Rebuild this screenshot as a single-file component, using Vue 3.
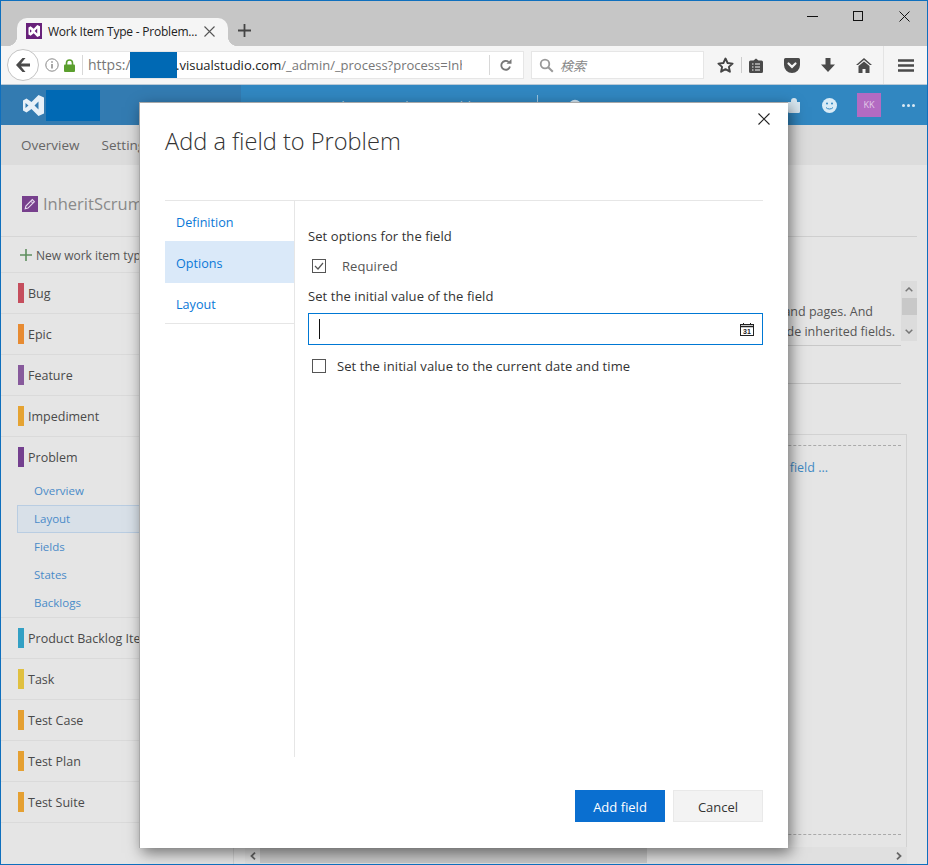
<script setup>
const types = [
  { name: 'Bug', color: '#c54e5d' },
  { name: 'Epic', color: '#e78b32' },
  { name: 'Feature', color: '#875a9c' },
  { name: 'Impediment', color: '#e5a332' },
  { name: 'Problem', color: '#74408f', subs: ['Overview', 'Layout', 'Fields', 'States', 'Backlogs'] },
  { name: 'Product Backlog Item', color: '#33a0c4' },
  { name: 'Task', color: '#e0c040' },
  { name: 'Test Case', color: '#e5a032' },
  { name: 'Test Plan', color: '#e5a032' },
  { name: 'Test Suite', color: '#e5a032' },
]
const tabs = ['Definition', 'Options', 'Layout']
</script>

<template>
  <div class="win">
    <div class="tabstrip">
      <div class="tab">
        <svg class="fav" width="16" height="16" viewBox="0 0 16 16"><rect width="16" height="16" fill="#68217a"/><path fill-rule="evenodd" d="M11.300 2 14 3.300v9.400L11.300 14 7.700 10.300 4.600 12.700 2.500 11.600V4.400L4.600 3.300 7.700 5.700zM4 6.300v3.400L5.800 8zM11.200 5.400 8.700 8l2.500 2.600z" fill="#fff"/></svg>
        <span class="tabtitle">Work Item Type - Problem...</span>
        <svg width="11" height="11" viewBox="0 0 11 11"><path d="M.5.5l10 10M10.500.5l-10 10" stroke="#555" stroke-width="1.100"/></svg>
      </div>
      <svg class="plus" width="13" height="13" viewBox="0 0 13 13"><path d="M6.500 0v13M0 6.500h13" stroke="#444" stroke-width="1.800"/></svg>
      <div class="winctl">
        <svg width="11" height="11" viewBox="0 0 11 11"><path d="M0 5.500h11" stroke="#111" stroke-width="1"/></svg>
        <svg width="11" height="11" viewBox="0 0 11 11"><rect x=".5" y=".5" width="9" height="9" fill="none" stroke="#111"/></svg>
        <svg width="11" height="11" viewBox="0 0 11 11"><path d="M.5.5l10 10M10.500.5l-10 10" stroke="#111" stroke-width="1"/></svg>
      </div>
    </div>

    <div class="toolbar">
      <div class="urlbar">
        <div class="back">
          <svg width="16" height="14" viewBox="0 0 16 14"><path d="M7.500 0 1 7l6.500 7h3L6 8.600h9V5.400H6L10.500 0z" fill="#4a4a4a"/></svg>
        </div>
        <svg class="info" width="14" height="14" viewBox="0 0 14 14"><circle cx="7" cy="7" r="6.200" fill="none" stroke="#888"/><path d="M7 6v4.500M7 3.300v1.500" stroke="#888" stroke-width="1.500"/></svg>
        <svg class="lock" width="11" height="13" viewBox="0 0 11 13"><path d="M2.500 6V4a3 3 0 0 1 6 0v2" fill="none" stroke="#5b9f2e" stroke-width="1.600"/><rect y="5.500" width="11" height="7.500" rx="1" fill="#5b9f2e"/></svg>
        <span class="vsep"></span>
        <div class="url"><span class="scheme">https:/</span><span class="redact"></span><b>.visualstudio.com</b>/_admin/_process?process=Inh</div>
        <span class="vsep2"></span>
        <svg class="reload" width="12" height="12" viewBox="0 0 12 12"><path d="M10 7.500A4.400 4.400 0 1 1 8.600 3" fill="none" stroke="#777" stroke-width="1.800"/><path d="M6.500 4.800h5V0z" fill="#777"/></svg>
      </div>
      <div class="search">
        <svg width="15" height="15" viewBox="0 0 15 15"><circle cx="6" cy="6" r="4.300" fill="none" stroke="#999" stroke-width="1.800"/><path d="m9.200 9.200 4.600 4.600" stroke="#999" stroke-width="2"/></svg>
        <span>検索</span>
      </div>
      <div class="tools">
        <svg class="t-star" width="17" height="16" viewBox="0 0 17 16"><path d="m8.500 1.500 2.100 4.500 5 .6-3.700 3.300 1 4.800-4.400-2.500-4.400 2.500 1-4.800L1.400 6.600l5-.6z" fill="none" stroke="#444" stroke-width="1.900" stroke-linejoin="round"/></svg>
        <span class="tsep"></span>
        <svg class="t-clip" width="14" height="15" viewBox="0 0 14 15"><path d="M1.500 2.500h3L7 .5l2.500 2h3a1.500 1.500 0 0 1 1.500 1.500v9.500a1.500 1.500 0 0 1-1.500 1.500h-11A1.500 1.500 0 0 1 0 13.500V4a1.500 1.500 0 0 1 1.500-1.500z" fill="#4a4a4a"/><path d="M3 6h1.500M6 6h5M3 9h1.500M6 9h5M3 12h1.500M6 12h5" stroke="#f5f5f5" stroke-width="1.200"/></svg>
        <svg class="t-pocket" width="16" height="15" viewBox="0 0 16 15"><path d="M1.500 0h13A1.500 1.500 0 0 1 16 1.500V7a8 8 0 0 1-16 0V1.500A1.500 1.500 0 0 1 1.500 0z" fill="#4a4a4a"/><path d="m4.500 5.500 3.500 3.400 3.500-3.400" fill="none" stroke="#f5f5f5" stroke-width="2.200" stroke-linecap="round"/></svg>
        <svg class="t-down" width="14" height="14" viewBox="0 0 14 14"><path d="M4.500 0h5v6.500H14L7 14 0 6.500h4.500z" fill="#4a4a4a"/></svg>
        <svg class="t-home" width="16" height="15" viewBox="0 0 16 15"><path d="M8 0 0 7h2L8 2l6 5h2z" fill="#4a4a4a"/><path d="M8 3.500 2.500 8v7h4v-4h3v4h4V8z" fill="#4a4a4a"/></svg>
        <span class="tsep2"></span>
        <svg class="t-menu" width="16" height="13" viewBox="0 0 16 13"><path d="M0 1.500h16M0 6.500h16M0 11.500h16" stroke="#4a4a4a" stroke-width="2.400"/></svg>
      </div>
    </div>

    <div class="apphead">
      <div class="brand">
        <svg width="21" height="21" viewBox="0 0 21 21"><path fill-rule="evenodd" d="M15.500 0 21 2.500v16L15.500 21 8.500 14 3.500 17.500 0 15.500v-10L3.500 3.500 8.500 7zM2.500 8v5L5.500 10.500zM15.500 6.500 11.500 10.500l4 4z" fill="#e6f0f8"/></svg>
        <span class="brandbox"></span>
      </div>
      <div class="headnav">
        <span>Home</span><span>Code</span><span>Work</span><span>Build</span>
        <i class="navsep"></i>
        <svg class="gear" width="14" height="14" viewBox="0 0 14 14"><circle cx="7" cy="7" r="5" fill="none" stroke="#cfe3f1" stroke-width="2.500"/></svg>
      </div>
      <div class="headright">
        <svg width="14" height="15" viewBox="0 0 14 15"><path d="M4 4V3a3 3 0 0 1 6 0v1h3v9.500a1.500 1.500 0 0 1-1.500 1.500h-9A1.500 1.500 0 0 1 1 13.500V4z" fill="#d9e8f2"/></svg>
        <svg class="smile" width="15" height="15" viewBox="0 0 15 15"><circle cx="7.500" cy="7.500" r="7.500" fill="#d9ebf6"/><circle cx="5" cy="5.500" r="1" fill="#3187c1"/><circle cx="10" cy="5.500" r="1" fill="#3187c1"/><path d="M4 9.500c1.500 2 5.500 2 7 0" fill="none" stroke="#3187c1"/></svg>
        <span class="avatar">KK</span>
        <span class="dots"><i></i><i></i><i></i></span>
      </div>
    </div>

    <div class="subnav"><span>Overview</span><span>Settings</span></div>

    <div class="body">
      <aside class="side">
        <div class="proc">
          <span class="procicon">
            <svg width="12" height="12" viewBox="0 0 12 12"><path d="M1.200 10.800l.7-2.800L8.300 1.600l2.100 2.100L4 10.100zM7.400 3.600l1 1" fill="none" stroke="#e8dcef" stroke-width="1.100"/></svg>
          </span>
          <span>InheritScrum</span>
        </div>
        <div class="newtype">
          <svg width="12" height="12" viewBox="0 0 12 12"><path d="M6 0v12M0 6h12" stroke="#5f8f5f" stroke-width="1.600"/></svg>
          <span>New work item type</span>
        </div>
        <div v-for="t in types" :key="t.name" class="group">
          <div class="row">
            <i class="bar" :style="{ background: t.color }"></i>
            <span>{{ t.name }}</span>
          </div>
          <div v-if="t.subs" class="subs">
            <div v-for="s in t.subs" :key="s" class="sub" :class="{ on: s === 'Layout' }">{{ s }}</div>
          </div>
        </div>
      </aside>

      <main class="main">
        <div class="pagehead"></div>
        <div class="desc">
          <div class="desctext">
            <p class="l1">and pages. And</p>
            <p>hide inherited fields.</p>
          </div>
          <div class="vscroll">
            <svg width="8" height="5" viewBox="0 0 8 5"><path d="M.7 4.300 4 1l3.300 3.300" fill="none" stroke="#777" stroke-width="1.500"/></svg>
            <i></i>
            <svg class="vdown" width="8" height="5" viewBox="0 0 8 5"><path d="M.7.700 4 4 7.300.700" fill="none" stroke="#777" stroke-width="1.500"/></svg>
          </div>
        </div>
        <div class="tabline"></div>
        <div class="panel">
          <div class="dash"></div>
          <div class="addlink">Add field ...</div>
          <div class="dash bottom"></div>
        </div>
        <div class="hscroll">
          <svg width="6" height="8" viewBox="0 0 6 8"><path d="M5 .7 1.500 4 5 7.300" fill="none" stroke="#666" stroke-width="1.800"/></svg>
          <i></i>
          <svg class="hright" width="6" height="8" viewBox="0 0 6 8"><path d="M1 .7 4.500 4 1 7.300" fill="none" stroke="#666" stroke-width="1.800"/></svg>
        </div>
      </main>
    </div>

    <section class="modal">
      <header class="mhead">
        <h1>Add a field to Problem</h1>
        <svg class="mclose" width="12" height="12" viewBox="0 0 12 12"><path d="M.5.500l11 11M11.500.500l-11 11" stroke="#222" stroke-width="1.100"/></svg>
      </header>
      <div class="mbody">
        <nav class="mnav">
          <div v-for="t in tabs" :key="t" class="mtab" :class="{ active: t === 'Options' }">{{ t }}</div>
        </nav>
        <div class="mform">
          <div class="lbl first">Set options for the field</div>
          <label class="chk req">
            <svg width="14" height="14" viewBox="0 0 14 14"><rect x=".5" y=".5" width="13" height="13" fill="#fff" stroke="#555"/><path d="m3 7 3 3 5-6" fill="none" stroke="#555" stroke-width="1.200"/></svg>
            <span>Required</span>
          </label>
          <div class="lbl second">Set the initial value of the field</div>
          <div class="input">
            <i class="caret"></i>
            <svg width="14" height="13" viewBox="0 0 14 13"><rect x=".5" y="1.500" width="13" height="11" fill="#fff" stroke="#222"/><path d="M1 3.500h12" stroke="#222" stroke-width="1.500"/><path d="M3.500 0v2M10.500 0v2" stroke="#222"/><text x="7" y="11" text-anchor="middle" class="cal31">31</text></svg>
          </div>
          <label class="chk now">
            <svg width="14" height="14" viewBox="0 0 14 14"><rect x=".5" y=".5" width="13" height="13" fill="#fff" stroke="#555"/></svg>
            <span>Set the initial value to the current date and time</span>
          </label>
        </div>
      </div>
      <footer class="mfoot">
        <button class="primary">Add field</button>
        <button class="ghost">Cancel</button>
      </footer>
    </section>
  </div>
</template>

<style>
html, body { margin: 0; padding: 0; background: #e5e5e5; }
</style>

<style scoped>
svg { flex: none; }
.win {
  position: relative;
  width: 928px;
  height: 865px;
  box-sizing: border-box;
  border: 1px solid #0f6fbd;
  overflow: hidden;
  display: flex;
  flex-direction: column;
  font-family: "Open Sans", "Noto Sans CJK JP", sans-serif;
  font-size: 12.5px;
  color: #444;
  background: #e5e5e5;
}
.tabstrip {
  height: 45px;
  flex: none;
  background: #c6c6c6;
  display: flex;
  align-items: flex-end;
  position: relative;
}
.tab {
  position: relative;
  margin-left: 16px;
  width: 211px;
  height: 28px;
  box-sizing: border-box;
  background: #f5f5f5;
  border-radius: 10px 10px 0 0;
  display: flex;
  align-items: center;
  padding: 0 13px 2px 9px;
  gap: 6px;
  color: #222;
}
.tab::before, .tab::after {
  content: "";
  position: absolute;
  bottom: 0;
  width: 10px;
  height: 10px;
}
.tab::before { left: -10px; background: radial-gradient(circle at 0 0, transparent 10px, #f5f5f5 10.5px); }
.tab::after { right: -10px; background: radial-gradient(circle at 100% 0, transparent 10px, #f5f5f5 10.5px); }
.tabtitle { flex: 1; white-space: nowrap; font-size: 12px; letter-spacing: -.22px; }
.plus { margin: 0 0 9px 10px; }
.winctl {
  position: absolute;
  top: 10px;
  right: 17px;
  display: flex;
  gap: 35px;
}
.toolbar {
  height: 39px;
  flex: none;
  box-sizing: border-box;
  background: #f5f5f5;
  border-bottom: 1px solid #b9c9d6;
  display: flex;
  align-items: center;
  position: relative;
}
.urlbar {
  margin-left: 19px;
  width: 504px;
  height: 28px;
  box-sizing: border-box;
  background: #fff;
  border: 1px solid #e6e6e6;
  display: flex;
  align-items: center;
  position: relative;
}
.back {
  position: absolute;
  left: -14px;
  top: -3px;
  width: 30px;
  height: 30px;
  border-radius: 50%;
  border: 1px solid #c4c4c4;
  background: #fff;
  display: flex;
  align-items: center;
  justify-content: center;
}
.info { margin-left: 24px; }
.lock { margin-left: 5px; }
.vsep { width: 1px; height: 20px; background: #d8d8d8; margin-left: 7px; flex: none; }
.url {
  margin: 0 27px 0 5px;
  flex: 1;
  height: 26px;
  line-height: 26px;
  font-size: 13px;
  color: #777;
  white-space: nowrap;
  overflow: hidden;
  display: flex;
  min-width: 0;
}
.scheme { width: 42px; flex: none; font-size: 14px; }
.url b { font-weight: 400; color: #222; margin-left: -1px; }
.redact { width: 47px; height: 28px; background: #0069b4; flex: none; }
.vsep2 { width: 1px; height: 20px; background: #d8d8d8; flex: none; }
.reload { margin: 0 11px 0 10px; }
.search {
  margin-left: 7px;
  width: 173px;
  height: 28px;
  box-sizing: border-box;
  background: #fff;
  border: 1px solid #e6e6e6;
  display: flex;
  align-items: center;
  padding-left: 7px;
  gap: 6px;
  font-style: italic;
  font-size: 13px;
  color: #888;
}
.tools { display: flex; align-items: center; margin-left: 13px; flex: 1; }
.tsep { width: 1px; height: 16px; background: #ccc; margin-left: 7px; }
.t-clip { margin-left: 7px; }
.t-pocket { margin-left: 21px; }
.t-down { margin-left: 21px; }
.t-home { margin-left: 21px; }
.tsep2 { width: 1px; height: 38px; background: #e4e4e4; margin-left: 11px; }
.t-menu { margin-left: 14px; }
.apphead {
  height: 40px;
  flex: none;
  display: flex;
  background: #3187c1;
}
.brand {
  width: 240px;
  flex: none;
  background: #337bb1;
  display: flex;
  align-items: center;
  padding-left: 22px;
  box-sizing: border-box;
  gap: 2px;
}
.brandbox { width: 54px; height: 31px; background: #0069b4; }
.headnav {
  flex: 1;
  display: flex;
  align-items: flex-start;
  padding: 12px 0 0 15px;
  gap: 28px;
  color: #b9d7ea;
  font-size: 13px;
  position: relative;
}
.navsep { position: absolute; left: 296px; top: 10px; width: 1px; height: 20px; background: #9cc4de; }
.gear { position: absolute; left: 327px; top: 14px; }
.headright { width: 140px; display: flex; align-items: center; flex: none; }
.smile { margin-left: 21px; }
.avatar {
  margin-left: 20px;
  width: 24px;
  height: 24px;
  background: #b36bc2;
  color: #e2cbe8;
  font-size: 9px;
  line-height: 24px;
  text-align: center;
}
.dots { display: flex; gap: 2px; margin-left: 21px; }
.dots i { width: 3px; height: 3px; background: #dbe9f3; border-radius: 50%; }
.subnav {
  height: 40px;
  flex: none;
  background: #dcdcdc;
  display: flex;
  align-items: center;
  padding-left: 20px;
  gap: 22px;
  font-size: 13.5px;
  color: #666;
}
.body { flex: 1; display: flex; min-height: 0; }
.side {
  width: 233px;
  flex: none;
  box-sizing: border-box;
  border-right: 1px solid #d2d2d2;
}
.proc {
  height: 72px;
  box-sizing: border-box;
  border-bottom: 1px solid #d6d6d6;
  display: flex;
  align-items: center;
  padding: 6px 0 0 21px;
  gap: 5px;
  font-size: 16.5px;
  color: #8a8a8a;
  white-space: nowrap;
}
.procicon {
  width: 16px;
  height: 16px;
  background: #77408d;
  display: flex;
  align-items: center;
  justify-content: center;
}
.newtype {
  height: 36px;
  box-sizing: border-box;
  border-bottom: 1px solid #dadada;
  display: flex;
  align-items: center;
  padding: 1px 0 0 19px;
  gap: 4px;
  font-size: 12px;
  color: #555;
  white-space: nowrap;
}
.group { border-bottom: 1px solid #dadada; }
.row {
  height: 40px;
  display: flex;
  align-items: center;
  padding-left: 17px;
  gap: 4px;
  white-space: nowrap;
  color: #4a4a4a;
}
.bar { width: 6px; height: 20px; flex: none; }
.subs { padding-left: 16px; }
.sub {
  height: 28px;
  line-height: 28px;
  padding-left: 17px;
  font-size: 11.5px;
  color: #4a8bc8;
  box-sizing: border-box;
}
.sub.on {
  background: #d8e0e8;
  border: 1px solid #b9cde2;
  border-right: 0;
  line-height: 26px;
  padding-left: 16px;
}
.main { flex: 1; display: flex; flex-direction: column; min-width: 0; }
.pagehead { height: 72px; flex: none; border-bottom: 1px solid #cfcfcf; margin-right: 10px; box-sizing: border-box; }
.desc { display: flex; margin: 44px 10px 0 0; height: 66px; align-items: flex-start; }
.desctext {
  flex: 1;
  height: 65px;
  border-bottom: 1px solid #c8c8c8;
  text-align: right;
  box-sizing: border-box;
  padding-top: 21px;
  padding-right: 6px;
  color: #555;
  white-space: nowrap;
  overflow: hidden;
}
.desctext p { margin: 0; line-height: 20px; font-size: 12.5px; }
.desctext .l1 { margin-right: 22px; }
.vscroll {
  width: 16px;
  height: 60px;
  background: #dcdcdc;
  display: flex;
  flex-direction: column;
  align-items: center;
  padding-top: 6px;
  box-sizing: border-box;
}
.vscroll i { width: 15px; height: 17px; background: #c8c8c8; margin-top: 6px; }
.vdown { margin-top: 14px; }
.tabline { height: 37px; margin-right: 26px; border-bottom: 1px solid #c8c8c8; box-sizing: border-box; flex: none; }
.panel {
  flex: 1;
  margin: 50px 20px 0 0;
  border: 1px solid #d2d2d2;
  border-bottom: 0;
  box-sizing: border-box;
  padding: 10px 5px 0 0;
  display: flex;
  flex-direction: column;
}
.dash { border-top: 1px dashed #aaa; }
.dash.bottom { margin-top: auto; margin-bottom: 12px; }
.addlink { color: #3f8ac4; text-align: right; padding: 13px 73px 0 0; font-size: 12.5px; }
.hscroll {
  height: 17px;
  flex: none;
  margin: 0 20px 0 11px;
  display: flex;
  align-items: center;
  background: #e0e0e0;
  padding: 0 5px;
}
.hscroll i { width: 387px; height: 15px; margin-left: 4px; background: #c8c8c8; }
.hright { margin-left: auto; }

.modal {
  position: absolute;
  left: 138px;
  top: 101px;
  width: 649px;
  height: 746px;
  box-sizing: border-box;
  background: #fff;
  border: 1px solid #a8a8a8;
  border-right: 0;
  border-bottom: 0;
  box-shadow: 3px 5px 14px rgba(0, 0, 0, .5);
  display: flex;
  flex-direction: column;
  padding: 0 25px;
}
.mhead {
  height: 98px;
  flex: none;
  box-sizing: border-box;
  border-bottom: 1px solid #e6e6e6;
  position: relative;
}
.mhead h1 {
  margin: 0;
  padding-top: 21px;
  font-size: 23.6px;
  line-height: 34px;
  font-weight: 300;
  color: #333;
}
.mclose { position: absolute; right: -7px; top: 10px; }
.mbody { flex: 1; display: flex; min-height: 0; }
.mnav {
  width: 130px;
  flex: none;
  box-sizing: border-box;
  border-right: 1px solid #e6e6e6;
}
.mtab {
  height: 40px;
  line-height: 44px;
  padding-left: 11px;
  color: #0a78d7;
  font-size: 12.6px;
}
.mtab.active { background: #dae9f9; height: 42px; line-height: 46px; }
.mtab:last-child { border-bottom: 1px solid #e6e6e6; }
.mform { flex: 1; padding-left: 13px; min-width: 0; font-size: 13px; letter-spacing: .08px; }
.lbl { color: #333; line-height: 20px; }
.lbl.first { margin-top: 25px; }
.lbl.second { margin-top: 10px; }
.chk { display: flex; align-items: center; margin-left: 4px; line-height: 20px; color: #333; }
.req { margin-top: 10px; gap: 16px; color: #555; }
.now { margin-top: 11px; gap: 11px; }
.input {
  margin-top: 7px;
  height: 32px;
  box-sizing: border-box;
  border: 1px solid #0078d4;
  display: flex;
  align-items: center;
  justify-content: space-between;
  padding: 0 8px 0 10px;
}
.caret { width: 1px; height: 20px; background: #111; }
.cal31 { font-family: "Liberation Sans", sans-serif; font-size: 7px; font-weight: 700; fill: #222; }
.mfoot {
  height: 91px;
  padding-top: 33px;
  box-sizing: border-box;
  flex: none;
  display: flex;
  justify-content: flex-end;
  gap: 8px;
}
.mfoot button {
  width: 90px;
  height: 32px;
  padding: 2px 0 0;
  font: inherit;
  font-size: 13px;
  box-sizing: border-box;
}
.primary { background: #0a6fd0; color: #fff; border: 0; }
.ghost { background: #f3f3f3; color: #333; border: 1px solid #e9e9e9; }
</style>
